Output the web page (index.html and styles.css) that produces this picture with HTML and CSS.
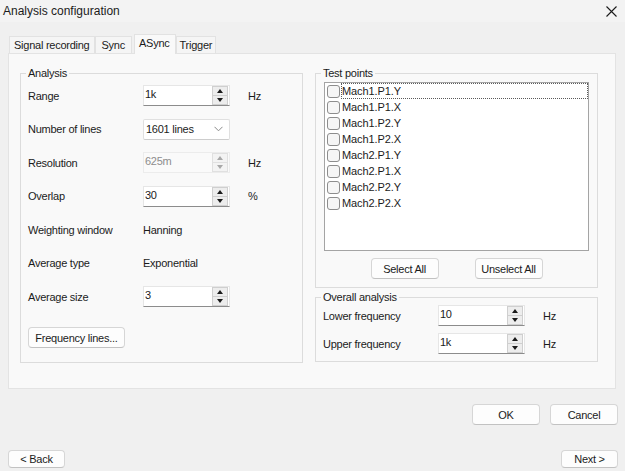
FILE: index.html
```html
<!DOCTYPE html>
<html>
<head>
<meta charset="utf-8">
<title>Analysis configuration</title>
<link rel="stylesheet" href="styles.css">
</head>
<body>
<div class="titlebar">
  <span class="title">Analysis configuration</span>
  <span class="close"><svg width="11" height="11" viewBox="0 0 11 11"><path d="M0.5 0.5 L10.5 10.5 M10.5 0.5 L0.5 10.5" stroke="#1a1a1a" stroke-width="1.1" fill="none"/></svg></span>
</div>
<div class="tabs">
  <div class="tab t-signal">Signal recording</div>
  <div class="tab t-sync">Sync</div>
  <div class="tab active t-async">ASync</div>
  <div class="tab t-trigger">Trigger</div>
</div>
<div class="pane">
  <fieldset class="group analysis">
    <legend>Analysis</legend>
    <div class="form">
      <span class="lbl">Range</span>
      <div class="spin"><span class="val">1k</span><span class="btns"><i class="up"></i><i class="down"></i></span></div>
      <span class="unit">Hz</span>

      <span class="lbl">Number of lines</span>
      <div class="combo"><span class="val">1601 lines</span><svg class="chev" width="9" height="6" viewBox="0 0 9 6"><path d="M0.5 0.8 L4.5 4.8 L8.5 0.8" stroke="#8a8a8a" stroke-width="1" fill="none"/></svg></div>
      <span></span>

      <span class="lbl">Resolution</span>
      <div class="spin disabled"><span class="val">625m</span><span class="btns"><i class="up"></i><i class="down"></i></span></div>
      <span class="unit">Hz</span>

      <span class="lbl">Overlap</span>
      <div class="spin"><span class="val">30</span><span class="btns"><i class="up"></i><i class="down"></i></span></div>
      <span class="unit">%</span>

      <span class="lbl">Weighting window</span>
      <span class="static">Hanning</span>
      <span></span>

      <span class="lbl">Average type</span>
      <span class="static">Exponential</span>
      <span></span>

      <span class="lbl">Average size</span>
      <div class="spin"><span class="val">3</span><span class="btns"><i class="up"></i><i class="down"></i></span></div>
      <span></span>
    </div>
    <button class="btn freq">Frequency lines...</button>
  </fieldset>

  <div class="rightcol">
    <fieldset class="group testpoints">
      <legend>Test points</legend>
      <div class="listbox">
        <div class="item"><span class="cb"></span><span class="name focus">Mach1.P1.Y</span></div>
        <div class="item"><span class="cb"></span><span class="name">Mach1.P1.X</span></div>
        <div class="item"><span class="cb"></span><span class="name">Mach1.P2.Y</span></div>
        <div class="item"><span class="cb"></span><span class="name">Mach1.P2.X</span></div>
        <div class="item"><span class="cb"></span><span class="name">Mach2.P1.Y</span></div>
        <div class="item"><span class="cb"></span><span class="name">Mach2.P1.X</span></div>
        <div class="item"><span class="cb"></span><span class="name">Mach2.P2.Y</span></div>
        <div class="item"><span class="cb"></span><span class="name">Mach2.P2.X</span></div>
      </div>
      <div class="selrow">
        <button class="btn">Select All</button>
        <button class="btn">Unselect All</button>
      </div>
    </fieldset>

    <fieldset class="group overall">
      <legend>Overall analysis</legend>
      <div class="form form2">
        <span class="lbl">Lower frequency</span>
        <div class="spin"><span class="val">10</span><span class="btns"><i class="up"></i><i class="down"></i></span></div>
        <span class="unit">Hz</span>

        <span class="lbl">Upper frequency</span>
        <div class="spin"><span class="val">1k</span><span class="btns"><i class="up"></i><i class="down"></i></span></div>
        <span class="unit">Hz</span>
      </div>
    </fieldset>
  </div>
</div>
<div class="okrow">
  <button class="btn dlg">OK</button>
  <button class="btn dlg">Cancel</button>
</div>
<div class="navrow">
  <button class="btn nav">&lt; Back</button>
  <button class="btn nav">Next &gt;</button>
</div>
</body>
</html>
```
FILE: styles.css
```css
* { box-sizing: border-box; }
html, body { margin: 0; padding: 0; }
body {
  width: 625px;
  height: 471px;
  overflow: hidden;
  background: #f0f0f0;
  font-family: "Liberation Sans", Arial, sans-serif;
  font-size: 11px;
  letter-spacing: -0.25px;
  color: #1b1b1b;
}

/* title bar */
.titlebar {
  height: 22px;
  background: #f3f3f3;
  display: flex;
  align-items: center;
  justify-content: space-between;
  padding: 0 8px 0 3px;
}
.title { font-size: 12px; letter-spacing: 0; }
.close svg { display: block; }

/* tabs */
.tabs {
  display: flex;
  align-items: flex-end;
  height: 19px;
  margin: 12px 0 0 9px;
  position: relative;
  z-index: 1;
}
.tab {
  height: 17px;
  line-height: 16px;
  padding: 0 4px;
  background: #f5f5f5;
  border: 1px solid #e2e2e2;
  border-bottom: none;
}
.t-sync { padding: 0 6px; }
.t-async { padding: 0 5px 0 4px; }
.t-trigger { padding: 0 3px; }
.tab.active {
  height: 20px;
  line-height: 16px;
  margin-left: 2px;
  margin-bottom: -1px;
  background: #f9f9f9;
  border-color: #e2e2e2;
}

/* pane */
.pane {
  margin: 0 9px 0 8px;
  height: 336px;
  background: #f9f9f9;
  border: 1px solid #e3e3e3;
  padding: 12px 0 0 11px;
  display: grid;
  grid-template-columns: 283px 283px;
  column-gap: 12px;
  align-items: start;
}

.group {
  margin: 0;
  padding: 0 5px;
  border: 1px solid #dcdcdc;
  min-width: 0;
}
.group legend {
  padding: 0 2px;
  line-height: 14px;
  font-size: 11px;
}

.form {
  display: grid;
  grid-template-columns: 115px 87px auto;
  grid-template-rows: repeat(7, 21px);
  row-gap: 12.5px;
  align-items: center;
  padding: 0 2px;
  margin-top: 5px;
}
.form2 {
  grid-template-rows: repeat(2, 21px);
  row-gap: 7px;
  margin-top: 1px;
  padding-bottom: 7px;
}
.unit { margin-left: 18px; }

/* spin box */
.spin {
  height: 21px;
  background: #fff;
  border: 1px solid #e6e6e6;
  border-bottom-color: #8c8c8c;
  display: flex;
  align-items: stretch;
  position: relative;
}
.spin .val {
  flex: 1;
  padding: 2px 0 0 1px;
  line-height: 13px;
}
.spin .btns {
  width: 16px;
  margin-right: 1px;
  display: flex;
  flex-direction: column;
}
.spin .btns i {
  flex: 1;
  display: flex;
  align-items: center;
  justify-content: center;
  background: #ededed;
  border: 1px solid #cfcfcf;
}
.spin .btns i + i { border-top: none; }
.spin .btns .up::after {
  content: "";
  border-left: 3.5px solid transparent;
  border-right: 3.5px solid transparent;
  border-bottom: 4px solid #1a1a1a;
}
.spin .btns .down::after {
  content: "";
  border-left: 3.5px solid transparent;
  border-right: 3.5px solid transparent;
  border-top: 4px solid #1a1a1a;
}
.spin.disabled {
  background: #fafafa;
  border-color: #ececec;
}
.spin.disabled .val { color: #8d8d8d; }
.spin.disabled .btns i { background: #f3f3f3; border-color: #e0e0e0; }
.spin.disabled .btns .up::after { border-bottom-color: #a8a8a8; }
.spin.disabled .btns .down::after { border-top-color: #a8a8a8; }

/* combo */
.combo {
  height: 21px;
  background: #fff;
  border: 1px solid #e0e0e0;
  border-bottom-color: #cdcdcd;
  border-radius: 2px;
  display: flex;
  align-items: center;
  padding: 0 0 0 2px;
}
.combo .val { flex: 1; }
.combo .chev { margin-right: 6px; }

/* buttons */
.btn {
  font: inherit;
  letter-spacing: inherit;
  color: #1b1b1b;
  background: #fdfdfd;
  border: 1px solid #d6d6d6;
  border-bottom-color: #c2c2c2;
  border-radius: 4px;
  padding: 0;
  height: 21px;
  text-align: center;
}
.freq {
  width: 97px;
  margin: 20px 0 14px 2px;
  display: block;
}

/* right column */
.rightcol {
  display: flex;
  flex-direction: column;
}
.listbox {
  margin: 2px 3px 0 3px;
  height: 169px;
  background: #fff;
  border: 1px solid #a4a4a4;
  padding-top: 0;
}
.item {
  height: 16px;
  display: flex;
  align-items: center;
}
.cb {
  width: 13px;
  height: 13px;
  margin: 0 1px 0 2px;
  border: 1px solid #8d8d8d;
  border-radius: 3px;
  background: #f6f6f6;
}
.name {
  flex: 1;
  height: 16px;
  line-height: 14px;
  padding-left: 0;
  border: 1px solid transparent;
  font-size: 11px;
  letter-spacing: -0.1px;
}
.name.focus { border: 1px dotted #5a5a5a; }
.selrow {
  display: flex;
  justify-content: center;
  gap: 36px;
  margin: 7px 0 8px;
}
.selrow .btn { width: 68px; }

.overall { margin-top: 2px; }

/* bottom */
.okrow {
  display: flex;
  justify-content: flex-end;
  gap: 10px;
  padding-right: 7px;
  margin-top: 15px;
}
.dlg { width: 68px; }
.navrow {
  display: flex;
  justify-content: space-between;
  padding: 0 7px 0 8px;
  margin-top: 25px;
}
.nav { width: 57px; height: 18px; }
```
